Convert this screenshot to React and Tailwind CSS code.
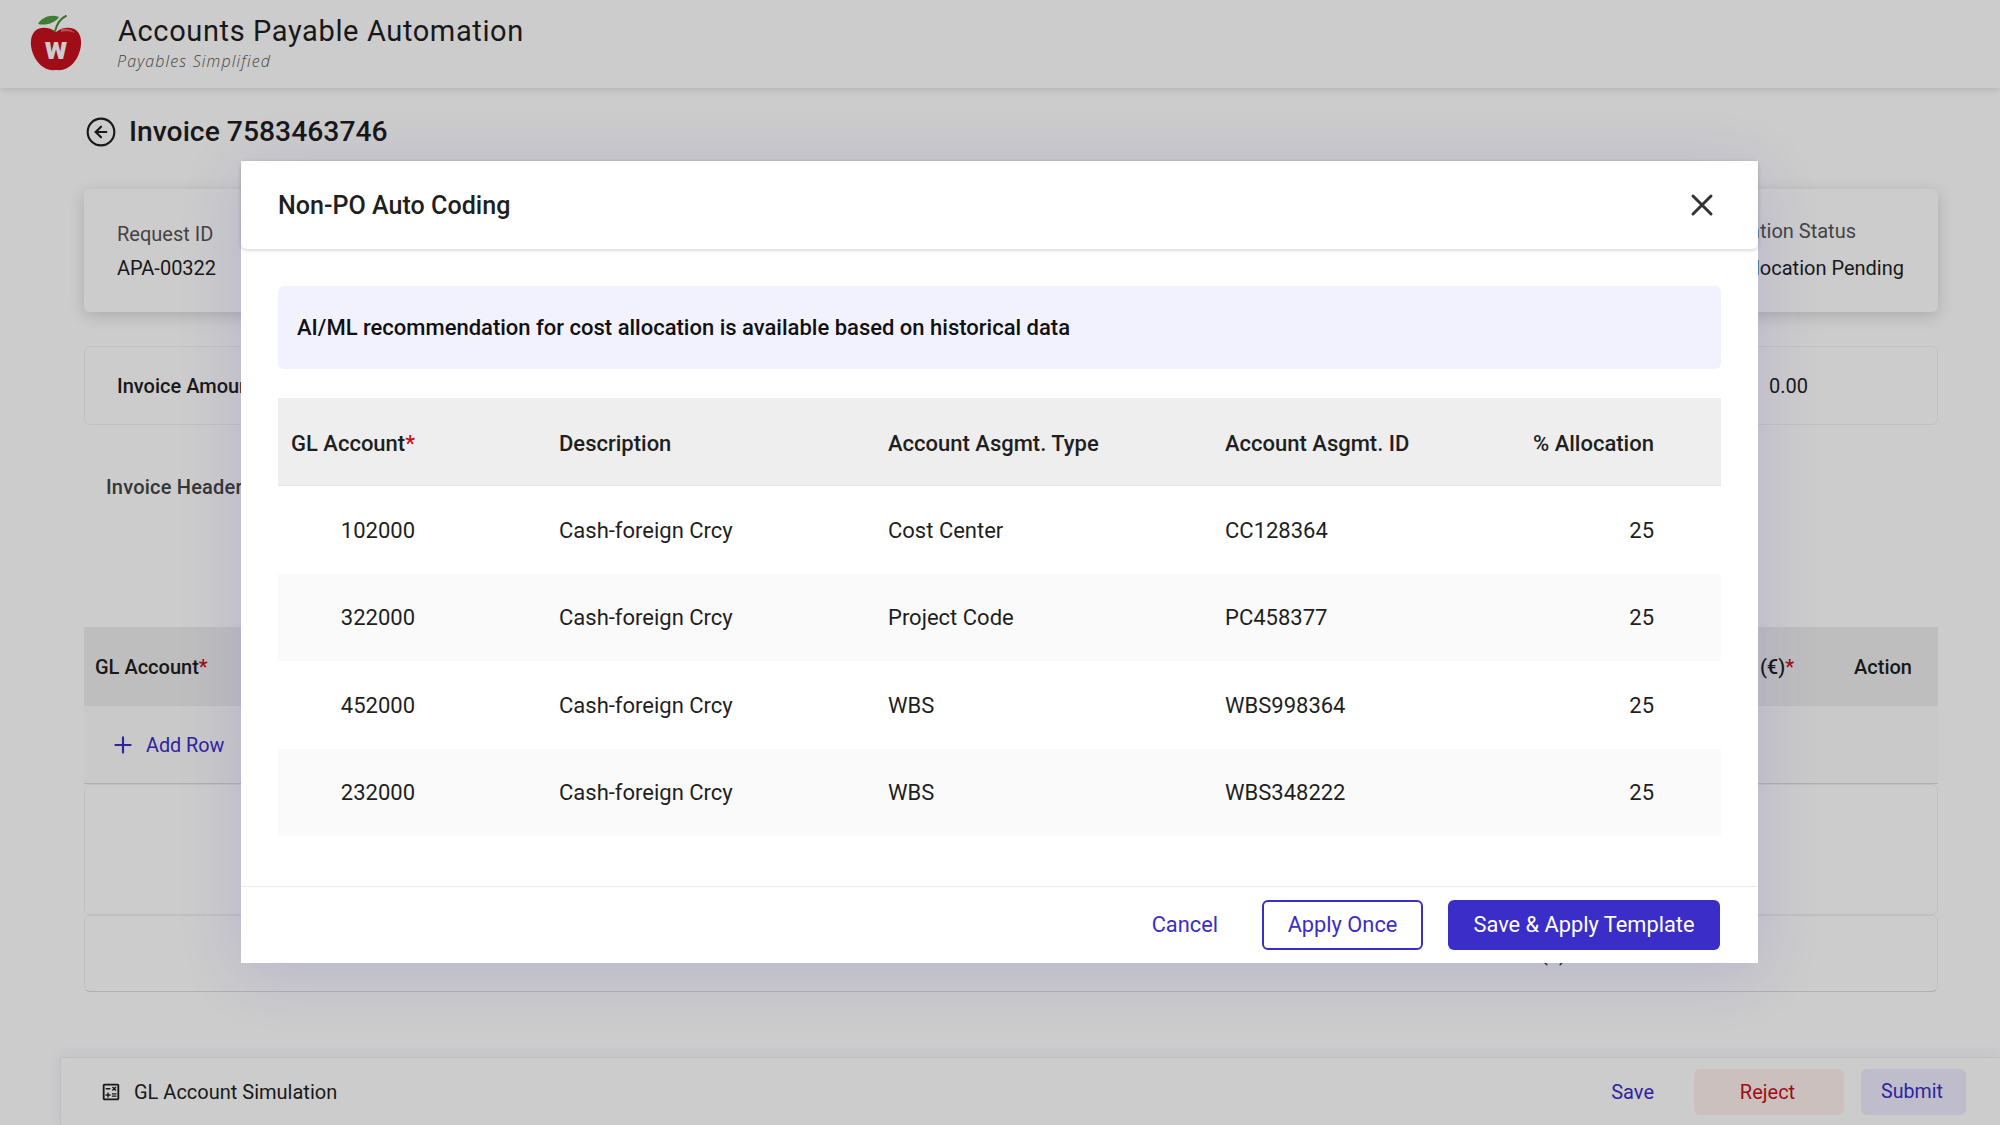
import React from "react";
import { CircleArrowLeft, Plus, X } from "lucide-react";
import { MdOutlineCalculate } from "react-icons/md";

const rows = [
  { gl: "102000", type: "Cost Center", id: "CC128364", shade: false },
  { gl: "322000", type: "Project Code", id: "PC458377", shade: true },
  { gl: "452000", type: "WBS", id: "WBS998364", shade: false },
  { gl: "232000", type: "WBS", id: "WBS348222", shade: true },
];

const Logo = () => (
  <svg viewBox="0 0 56 60" className="w-[56px] h-[60px]">
    <path
      d="M28 19C22 14 12 13 7 18C1 24 2 36 7 45C12 54 20 58 28 57C36 58 44 54 49 45C54 36 55 24 49 18C44 13 34 14 28 19Z"
      fill="#c8111c"
    />
    <path d="M33 16C38 15 44 16 47 20C42 18 37 18 33 19Z" fill="#e8636a" />
    <path d="M27 18C29 11 33 5 38 3" stroke="#4c8f3a" strokeWidth="2" fill="none" strokeLinecap="round" />
    <path d="M10 11C14 4 23 1 31 4C27 10 18 13 10 11Z" fill="#4e9a41" />
    <text x="28" y="46" textAnchor="middle" fill="#fff" fontSize="31" fontWeight="900" fontFamily="Roboto, sans-serif">
      w
    </text>
  </svg>
);

const App = () => {
  return (
    <div className="relative w-full h-[1125px] overflow-hidden bg-white font-['Roboto',sans-serif] text-[#1f1f1f]">
      <div className="h-[88px] flex items-center pl-[28px] pb-[3px] shadow-[0_2px_6px_rgba(0,0,0,0.12)]">
        <Logo />
        <div className="ml-[34px] flex flex-col">
          <div className="text-[29px] leading-[36px] tracking-[0.62px]">Accounts Payable Automation</div>
          <div className="-ml-[1px] text-[16px] leading-[24px] italic font-light tracking-[1.15px] text-[#555] font-['Open_Sans',sans-serif]">
            Payables Simplified
          </div>
        </div>
      </div>

      <div className="pl-[84px] pr-[62px]">
        <div className="mt-[24px] h-[40px] flex items-center gap-[12px] pl-[1px]">
          <CircleArrowLeft size={32} strokeWidth={1.6} />
          <h1 className="pt-[1px] text-[28.3px] font-medium">Invoice 7583463746</h1>
        </div>

        <div className="mt-[37px] h-[123px] flex justify-between rounded-md shadow-[0_4px_16px_rgba(0,0,0,0.16)] pl-[33px] pr-[34px]">
          <div className="flex flex-col gap-[10px] pt-[33px] text-[20px] leading-[24px]">
            <div className="text-[#555]">Request ID</div>
            <div>APA-00322</div>
          </div>
          <div className="flex flex-col items-end gap-[13px] pt-[30px] text-[20px] leading-[24px]">
            <div className="mr-[48px] text-[#555]">Allocation Status</div>
            <div>Allocation Pending</div>
          </div>
        </div>

        <div className="mt-[34px] h-[79px] flex items-center justify-between rounded-md border border-[#f2f2f2] pl-[32px] pr-[129px] text-[20px]">
          <div className="font-medium">Invoice Amount</div>
          <div>0.00</div>
        </div>

        <div className="mt-[41px] h-[40px] flex items-center pl-[22px] pt-[2px] text-[20px] tracking-[0.2px] font-medium text-[#444]">
          Invoice Header
        </div>

        <div className="mt-[121px] h-[79px] flex items-center justify-between bg-[#eeeeee] pl-[11px] pr-[26px] pt-[1px] text-[20px] font-medium">
          <div>
            GL Account<span className="text-[#c8111c]">*</span>
          </div>
          <div className="flex items-center gap-[60px]">
            <div>
              (€)<span className="text-[#c8111c]">*</span>
            </div>
            <div>Action</div>
          </div>
        </div>
        <div className="h-[78px] flex items-center gap-[10px] pl-[26px] border-b border-[#dcdcdc] text-[#3a2dc8] text-[19.8px] bg-[#fcfcfc]">
          <Plus size={26} strokeWidth={2} />
          <span className="pt-[2px]">Add Row</span>
        </div>
        <div className="h-[131px] rounded-md border border-[#f2f2f2]"></div>
        <div className="h-[77px] flex items-center justify-end pr-[371px] rounded-md border border-[#f2f2f2] border-b-[#dcdcdc] text-[20px]">
          Total (€)
        </div>
      </div>

      <div className="mt-[65px] ml-[60px] h-[68px] flex items-center justify-between border-t border-l border-[#f0f0f0] pl-[39px] pr-[34px] text-[20px] shadow-[0_0_14px_rgba(58,45,200,0.08)]">
        <div className="flex items-center gap-[12px]">
          <MdOutlineCalculate size={22} />
          GL Account Simulation
        </div>
        <div className="flex items-center">
          <div className="mr-[1px] text-[#3a2dc8]">Save</div>
          <div className="ml-[39px] w-[150px] h-[46px] flex items-center justify-center pr-[3px] rounded-md bg-[#fff0ee] text-[#c8111c]">
            Reject
          </div>
          <div className="ml-[17px] w-[105px] h-[46px] flex items-center justify-center pr-[3px] rounded-md bg-[#efecff] text-[19.6px] text-[#3a2dc8]">
            Submit
          </div>
        </div>
      </div>

      <div className="absolute inset-0 bg-black/20">
        <div className="ml-[241px] mt-[161px] w-[1517px] h-[802px] flex flex-col bg-white shadow-[0_10px_60px_rgba(58,45,200,0.14)]">
          <div className="h-[88px] shrink-0 flex items-center justify-between pl-[37px] pr-[38px] rounded-md shadow-[0_1px_4px_rgba(0,0,0,0.2)]">
            <h2 className="pt-[2px] text-[25.1px] font-medium">Non-PO Auto Coding</h2>
            <X size={36} strokeWidth={2} className="text-[#333]" />
          </div>

          <div className="flex-1 px-[37px] pt-[37px]">
            <div className="h-[83px] flex items-center pl-[19px] rounded-md bg-[#f2f1fe] text-[22px] font-medium text-[#111]">
              AI/ML recommendation for cost allocation is available based on historical data
            </div>

            <div className="mt-[29px] h-[88px] grid grid-cols-[268px_329px_338px_307px_200px] items-center pt-[3px] bg-[#eeeeee] border-b border-[#e4e4e4] text-[22px] font-medium">
              <div className="pl-[13px]">
                GL Account<span className="text-[#c8111c]">*</span>
              </div>
              <div className="pl-[13px]">Description</div>
              <div className="pl-[13px]">Account Asgmt. Type</div>
              <div className="pl-[12px]">Account Asgmt. ID</div>
              <div className="pl-[13px]">% Allocation</div>
            </div>
            {rows.map((row) => (
              <div
                key={row.gl}
                className={`h-[87.5px] grid grid-cols-[268px_329px_338px_307px_200px] items-center pt-[1px] text-[22px] ${
                  row.shade ? "bg-[#fafafa]" : "bg-white"
                }`}
              >
                <div className="pr-[131px] text-right">{row.gl}</div>
                <div className="pl-[13px]">Cash-foreign Crcy</div>
                <div className="pl-[13px]">{row.type}</div>
                <div className="pl-[12px]">{row.id}</div>
                <div className="pr-[66px] text-right">25</div>
              </div>
            ))}
          </div>

          <div className="h-[77px] shrink-0 flex items-center justify-end pr-[38px] border-t border-[#e9e9ef] text-[21.8px]">
            <div className="mr-[-1px] text-[#3a2dc8]">Cancel</div>
            <div className="ml-[45px] w-[161px] h-[50px] flex items-center justify-center rounded-md border-2 border-[#3a2dc8] text-[#3a2dc8]">
              Apply Once
            </div>
            <div className="ml-[25px] w-[272px] h-[50px] flex items-center justify-center rounded-md bg-[#3a2dc8] text-white">
              Save &amp; Apply Template
            </div>
          </div>
        </div>
      </div>
    </div>
  );
};

export default App;
